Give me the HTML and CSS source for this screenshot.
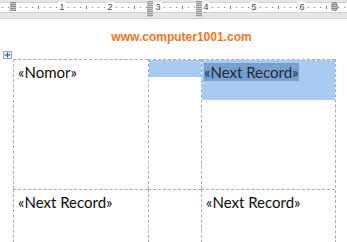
FILE: index.html
```html
<!DOCTYPE html>
<html lang="en">
<head>
  <meta charset="UTF-8" />
  <title>Mail Merge Labels</title>
  <link rel="stylesheet" href="styles.css">
</head>
<body>

  <div class="ruler">
    <div class="ruler-strip">
      <div class="ruler-numbers">
        <span><b>1</b></span>
        <span><b>2</b></span>
        <span><b>3</b></span>
        <span><b>4</b></span>
        <span><b>5</b></span>
        <span><b>6</b></span>
      </div>
    </div>
    <div class="marker marker-indent"></div>
    <div class="marker marker-col" style="left: 147px"></div>
    <div class="marker marker-col" style="left: 196px"></div>
    <div class="marker marker-right"></div>
  </div>

  <div class="page">
    <div class="site">www.computer1001.com</div>

    <div class="move-handle">
      <svg width="9" height="8" viewBox="0 0 9 8">
        <rect x="0.5" y="0.5" width="8" height="7" fill="#eef2f8" stroke="#9aa6bc" />
        <path d="M4.5 1.5v5M2 4h5" stroke="#3d5f96" stroke-width="1" />
        <path d="M4.5 1.5l-1 1h2zM4.5 6.5l-1-1h2zM1.5 4l1-1v2zM7.5 4l-1-1v2z" fill="#3d5f96" />
      </svg>
    </div>

    <div class="labels">
      <div class="cell">
        <div class="para">«Nomor»</div>
      </div>
      <div class="cell">
        <div class="para para-empty selected"></div>
      </div>
      <div class="cell">
        <div class="para para-tall selected"><span class="mark">«Next Record»</span></div>
      </div>

      <div class="cell">
        <div class="para">«Next Record»</div>
      </div>
      <div class="cell"></div>
      <div class="cell">
        <div class="para">«Next Record»</div>
      </div>
    </div>
  </div>

</body>
</html>
```

FILE: styles.css
```css
body {
  margin: 0;
  background: #fff;
  font-family: Lato, 'Liberation Sans', sans-serif;
  color: #111;
  overflow: hidden;
}

/* ruler */

.ruler {
  position: relative;
  height: 19px;
  background: #e6e6e6;
  border-bottom: 1px solid #d2d2d2;
  box-sizing: border-box;
  padding-top: 2px;
}

.ruler-strip {
  height: 9px;
  background:
    linear-gradient(to right, #6f6f6f 1px, transparent 1px) 38px 3px / 48px 3px repeat-x,
    linear-gradient(to right, #7a7a7a 1px, transparent 1px) 2px 4px / 6px 1px repeat-x,
    #fff;
  border-top: 1px solid #d0d0d0;
  border-bottom: 1px solid #d0d0d0;
}

.ruler-numbers {
  display: flex;
  padding-left: 38px;
}

.ruler-numbers span {
  width: 48px;
  text-align: center;
  font-family: 'Liberation Sans', sans-serif;
  font-size: 9px;
  line-height: 9px;
  color: #444;
}

.ruler-numbers b {
  font-weight: normal;
  background: #fff;
  padding: 0 1px;
}

.marker {
  position: absolute;
}

.marker-indent {
  left: 10px;
  top: 2px;
  width: 6px;
  height: 9px;
  background: repeating-linear-gradient(to bottom, #8c8c8c 0 1px, #c4c4c4 1px 2px);
}

.marker-col {
  top: 1px;
  width: 6px;
  height: 16px;
  background: repeating-linear-gradient(to bottom, #9a9a9a 0 1px, #cdcdcd 1px 2px);
  border-radius: 1px;
}

.marker-right {
  left: 331px;
  top: 2px;
  width: 7px;
  height: 9px;
  border-radius: 3px;
  background: repeating-linear-gradient(to bottom, #8c8c8c 0 1px, #bdbdbd 1px 2px);
}

/* page */

.page {
  padding: 11px 0 0 3px;
}

.site {
  padding-left: 13px;
  text-align: center;
  font-family: 'Liberation Sans', Arial, sans-serif;
  font-weight: bold;
  font-size: 12px;
  line-height: 14px;
  color: #f2761c;
}

.move-handle {
  margin-top: 7px;
  height: 8px;
}

.move-handle svg {
  display: block;
}

.labels {
  display: grid;
  grid-template-columns: 135px 53px 134px;
  grid-template-rows: 130px 130px;
  margin-left: 10px;
  width: max-content;
  border-right: 1px dashed #a4aac4;
}

.cell {
  border-left: 1px dashed #a4aac4;
  border-top: 1px dashed #a4aac4;
}

.para {
  padding: 3px 3px 0 4px;
  font-size: 15px;
  line-height: 18px;
  color: #0c0c0c;
}

.para-empty {
  height: 17px;
  padding: 0;
}

.para-tall {
  padding: 3px 3px 19px 2px;
}

.selected {
  background: #a9cbf1;
}

.mark {
  background: #7a9fcb;
  color: #182b48;
}
```
